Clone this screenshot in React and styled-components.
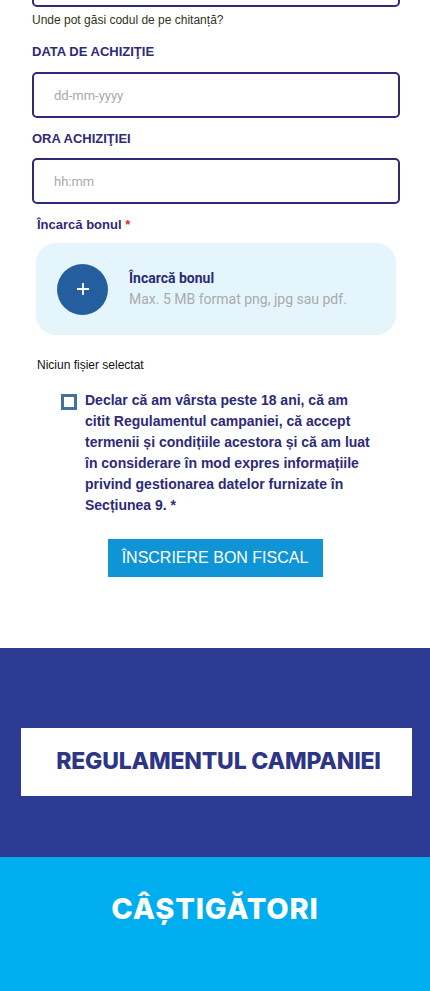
import React from 'react'
import styled, { createGlobalStyle } from 'styled-components'

const navy = '#2d2a78'

const GlobalStyle = createGlobalStyle`
  html, body {
    margin: 0;
    padding: 0;
    background: #fff;
    overflow: hidden;
  }
  * {
    box-sizing: border-box;
  }
`

const Page = styled.div`
  width: 430px;
  font-family: "Liberation Sans", Arial, sans-serif;
`

const Form = styled.form`
  padding: 0 30px 0 32px;
  display: flex;
  flex-direction: column;
`

const Field = styled.input`
  display: block;
  width: 100%;
  height: 46px;
  margin: ${({ $cut }) => ($cut ? '-39px 0 0' : '0')};
  padding: 0 20px;
  border: 2.5px solid ${navy};
  border-radius: 5px;
  font-family: Roboto, sans-serif;
  font-size: 13px;
  color: #333;
  outline: none;
  &::placeholder {
    color: #a9a9a9;
  }
`

const Hint = styled.div`
  margin-top: 6px;
  font-size: 12px;
  line-height: 14px;
  color: #2f3519;
`

const Label = styled.label`
  display: block;
  margin: ${({ $top }) => $top}px 0 ${({ $bottom }) => $bottom}px;
  font-size: 13px;
  font-weight: 700;
  line-height: 16px;
  color: ${navy};
  padding-left: ${({ $indent }) => $indent || 0}px;
`

const Star = styled.span`
  color: #e02b2b;
`

const Upload = styled.div`
  margin: 0 4px;
  height: 92px;
  border-radius: 20px;
  background: #e4f6fb;
  display: flex;
  align-items: center;
  gap: 21px;
  padding-left: 21px;
`

const Circle = styled.div`
  width: 51px;
  height: 51px;
  border-radius: 50%;
  background: #245e9e;
  display: flex;
  align-items: center;
  justify-content: center;
  flex-shrink: 0;
`

const UploadText = styled.div`
  font-family: Roboto, sans-serif;
  font-size: 14px;
  line-height: 21px;
`

const UploadTitle = styled.div`
  font-weight: 700;
  color: ${navy};
`

const UploadSub = styled.div`
  color: #a9abad;
`

const NoFile = styled.div`
  margin: 23px 0 0 5px;
  font-size: 12px;
  line-height: 14px;
  color: #111;
`

const Consent = styled.label`
  display: flex;
  align-items: flex-start;
  gap: 8px;
  margin: 18px 0 0 29px;
`

const Box = styled.span`
  width: 16px;
  height: 16px;
  margin-top: 4px;
  border: 3px solid #41739f;
  background: #fff;
  flex-shrink: 0;
`

const ConsentText = styled.div`
  width: 310px;
  font-size: 14px;
  font-weight: 700;
  line-height: 21px;
  color: ${navy};
`

const Submit = styled.button`
  align-self: center;
  margin: 23px 0 0 -2px;
  width: 215px;
  height: 38px;
  border: 0;
  background: #0f95d5;
  color: #fff;
  font-family: "Liberation Sans", Arial, sans-serif;
  font-size: 16px;
`

const Rules = styled.section`
  margin-top: 71px;
  height: 209px;
  background: #2e3b94;
  display: flex;
  align-items: center;
  padding: 18px 18px 0 21px;
`

const RulesBox = styled.div`
  flex: 1;
  height: 68px;
  background: #fff;
  display: flex;
  align-items: center;
  justify-content: center;
  padding: 0 0 2px 4px;
  font-family: Inter, "Open Sans", sans-serif;
  font-weight: 800;
  font-size: 23px;
  letter-spacing: -0.2px;
  color: #2e3585;
`

const Winners = styled.section`
  height: 140px;
  background: #00aeef;
  display: flex;
  justify-content: center;
  padding-top: 35px;
  font-family: Inter, "Open Sans", sans-serif;
  font-weight: 800;
  font-size: 29px;
  line-height: 34px;
  letter-spacing: 0.8px;
  color: #fff;
`

export default function App() {
  return (
    <Page>
      <GlobalStyle />
      <Form onSubmit={(e) => e.preventDefault()}>
        <Field $cut type="text" />
        <Hint>Unde pot găsi codul de pe chitanță?</Hint>
        <Label $top={17} $bottom={12}>DATA DE ACHIZIŢIE</Label>
        <Field type="text" placeholder="dd-mm-yyyy" />
        <Label $top={13} $bottom={11}>ORA ACHIZIŢIEI</Label>
        <Field type="text" placeholder="hh:mm" />
        <Label $top={13} $bottom={10} $indent={5}>
          Încarcă bonul <Star>*</Star>
        </Label>
        <Upload>
          <Circle>
            <svg width="14" height="14" viewBox="0 0 14 14">
              <path d="M7 1v12M1 7h12" stroke="#fff" strokeWidth="1.8" />
            </svg>
          </Circle>
          <UploadText>
            <UploadTitle>Încarcă bonul</UploadTitle>
            <UploadSub>Max. 5 MB format png, jpg sau pdf.</UploadSub>
          </UploadText>
        </Upload>
        <NoFile>Niciun fișier selectat</NoFile>
        <Consent>
          <Box />
          <ConsentText>
            Declar că am vârsta peste 18 ani, că am<br />
            citit Regulamentul campaniei, că accept<br />
            termenii și condițiile acestora și că am luat<br />
            în considerare în mod expres informațiile<br />
            privind gestionarea datelor furnizate în<br />
            Secțiunea 9. *
          </ConsentText>
        </Consent>
        <Submit type="submit">ÎNSCRIERE BON FISCAL</Submit>
      </Form>
      <Rules>
        <RulesBox>REGULAMENTUL CAMPANIEI</RulesBox>
      </Rules>
      <Winners>CÂȘTIGĂTORI</Winners>
    </Page>
  )
}
